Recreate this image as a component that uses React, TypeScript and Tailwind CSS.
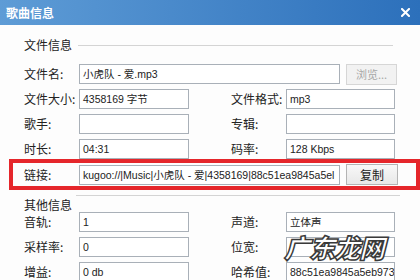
import type { ReactNode } from 'react';

const cjk = "font-['Noto_Sans_CJK_SC','Noto_Sans',sans-serif]";
const fieldFont = "font-['Liberation_Sans','Noto_Sans_CJK_SC',sans-serif]";

function Field({ value, width }: { value?: string; width: string }) {
  return (
    <div
      className={`${width} h-[20px] shrink-0 border border-[#a9b0b8] bg-white pl-[3px] text-[10.5px] leading-[18px] text-[#222] whitespace-nowrap overflow-hidden ${fieldFont}`}
    >
      {value}
    </div>
  );
}

function Label({ children, width }: { children: ReactNode; width: string }) {
  return (
    <span className={`${width} shrink-0 text-[12px] leading-[20px] text-[#222] ${cjk}`}>{children}</span>
  );
}

function PairRow({
  left,
  leftValue,
  right,
  rightValue,
}: {
  left: string;
  leftValue?: string;
  right: string;
  rightValue?: string;
}) {
  return (
    <div className="flex h-[20px] items-center pl-[24px]">
      <Label width="w-[55px]">{left}</Label>
      <Field value={leftValue} width="w-[110px]" />
      <span className="w-[42px] shrink-0" />
      <Label width="w-[55px]">{right}</Label>
      <Field value={rightValue} width="w-[109px]" />
    </div>
  );
}

function GroupTitle({ title, className }: { title: string; className: string }) {
  return (
    <div className={`flex items-center pl-[24px] pr-[27px] ${className}`}>
      <span className={`text-[12px] leading-[16px] text-[#222] ${cjk}`}>{title}</span>
      <div className="ml-[6px] h-px flex-1 bg-[#d4d4d4]" />
    </div>
  );
}

export default function App() {
  return (
    <div className="relative h-[280px] w-[420px] overflow-hidden bg-[#fdfdfd]">
      {/* Title bar */}
      <div className="flex h-[25px] items-center justify-between bg-gradient-to-r from-[#5e9cd6] to-[#2c70bb] pl-[6px] pr-[10px]">
        <span className={`text-[12px] font-bold text-white ${cjk}`}>歌曲信息</span>
        <svg width="9" height="9" viewBox="0 0 9 9">
          <path d="M1 1L8 8M8 1L1 8" stroke="white" strokeWidth="2" strokeLinecap="square" />
        </svg>
      </div>

      <GroupTitle title="文件信息" className="mt-[12px]" />

      <div className="mt-[11px] flex flex-col gap-[5px]">
        <div className="flex h-[20px] items-center pl-[24px]">
          <Label width="w-[55px]">文件名:</Label>
          <Field value="小虎队 - 爱.mp3" width="w-[261px]" />
          <button
            className={`ml-[6px] h-[21px] w-[51px] border border-[#d6d6d6] bg-[#f2f2f2] text-[11px] text-[#a8a8a8] ${cjk}`}
          >
            浏览...
          </button>
        </div>
        <PairRow left="文件大小:" leftValue="4358169 字节" right="文件格式:" rightValue="mp3" />
        <PairRow left="歌手:" right="专辑:" />
        <PairRow left="时长:" leftValue="04:31" right="码率:" rightValue="128 Kbps" />
      </div>

      {/* Highlighted link row */}
      <div className="ml-[9px] flex w-[411px] items-center border-[4px] border-[#e5262b] py-[1px] pl-[11px]">
        <Label width="w-[55px]">链接:</Label>
        <Field value="kugoo://|Music|小虎队 - 爱|4358169|88c51ea9845a5el" width="w-[261px]" />
        <button
          className={`ml-[6px] h-[21px] w-[52px] border border-[#b4b4b4] bg-gradient-to-b from-[#f8f8f8] to-[#e8e8e8] text-[12px] text-[#222] ${cjk}`}
        >
          复制
        </button>
      </div>

      <div className="mt-[5px] flex items-start pl-[24px] pr-[20px]">
        <span className={`mt-[2px] text-[12px] leading-[16px] text-[#222] ${cjk}`}>其他信息</span>
        <div className="ml-[4px] h-px flex-1 bg-[#d4d4d4]" />
      </div>

      <div className="mt-[-1px] flex flex-col gap-[5px]">
        <PairRow left="音轨:" leftValue="1" right="声道:" rightValue="立体声" />
        <PairRow left="采样率:" leftValue="0" right="位宽:" />
        <PairRow left="增益:" leftValue="0 db" right="哈希值:" rightValue="88c51ea9845a5eb97335'" />
      </div>

      {/* Watermark */}
      <span
        className={`absolute left-[284px] top-[232px] text-[26px] font-black italic leading-[30px] tracking-[-1px] text-white [-webkit-text-stroke:1.5px_#3a3a3a] ${cjk}`}
      >
        广东龙网
      </span>
    </div>
  );
}
